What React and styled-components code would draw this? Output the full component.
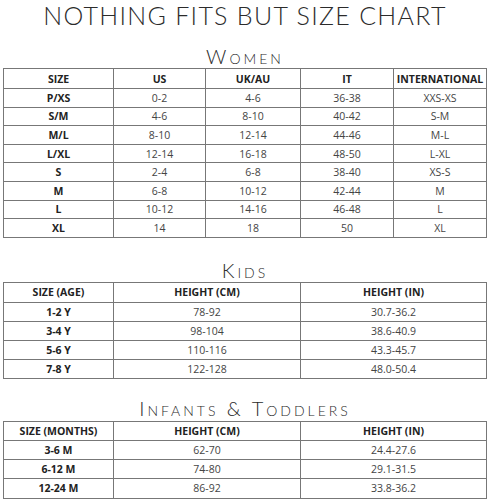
import React from 'react';
import styled, { createGlobalStyle } from 'styled-components';

const women = [
  ['P/XS', '0-2', '4-6', '36-38', 'XXS-XS'],
  ['S/M', '4-6', '8-10', '40-42', 'S-M'],
  ['M/L', '8-10', '12-14', '44-46', 'M-L'],
  ['L/XL', '12-14', '16-18', '48-50', 'L-XL'],
  ['S', '2-4', '6-8', '38-40', 'XS-S'],
  ['M', '6-8', '10-12', '42-44', 'M'],
  ['L', '10-12', '14-16', '46-48', 'L'],
  ['XL', '14', '18', '50', 'XL'],
];

const kids = [
  ['1-2 Y', '78-92', '30.7-36.2'],
  ['3-4 Y', '98-104', '38.6-40.9'],
  ['5-6 Y', '110-116', '43.3-45.7'],
  ['7-8 Y', '122-128', '48.0-50.4'],
];

const infants = [
  ['3-6 M', '62-70', '24.4-27.6'],
  ['6-12 M', '74-80', '29.1-31.5'],
  ['12-24 M', '86-92', '33.8-36.2'],
];

// heights below are the content box; collapsed borders add ~1px per row
const SizeTable = ({ cols, head, rows, headHeight, rowHeight }) => (
  <Table>
    <colgroup>
      {cols.map((w, i) => (
        <col key={i} style={{ width: w }} />
      ))}
    </colgroup>
    <thead>
      <tr>
        {head.map((h) => (
          <Th key={h} $h={headHeight}>{h}</Th>
        ))}
      </tr>
    </thead>
    <tbody>
      {rows.map((r) => (
        <tr key={r[0]}>
          {r.map((c, i) =>
            i === 0 ? (
              <RowHead key={i} $h={rowHeight}>{c}</RowHead>
            ) : (
              <Td key={i} $h={rowHeight}>{c}</Td>
            )
          )}
        </tr>
      ))}
    </tbody>
  </Table>
);

const App = () => {
  return (
    <>
      <GlobalStyle />
      <Page>
        <Title>NOTHING FITS BUT SIZE CHART</Title>
        <Section $top={17}>
          <Label>Women</Label>
          <SizeTable
            cols={['110px', '92px', '95px', '93px', '93px']}
            head={['SIZE', 'US', 'UK/AU', 'IT', 'INTERNATIONAL']}
            rows={women}
            headHeight={19}
            rowHeight={17.6}
          />
        </Section>
        <Section $top={22}>
          <Label>Kids</Label>
          <SizeTable
            cols={['110px', '187px', '186px']}
            head={['SIZE (AGE)', 'HEIGHT (CM)', 'HEIGHT (IN)']}
            rows={kids}
            headHeight={19}
            rowHeight={18}
          />
        </Section>
        <Section $top={19} $gap={3}>
          <Label>Infants &amp; Toddlers</Label>
          <SizeTable
            cols={['110px', '187px', '186px']}
            head={['SIZE (MONTHS)', 'HEIGHT (CM)', 'HEIGHT (IN)']}
            rows={infants}
            headHeight={18}
            rowHeight={18.3}
          />
        </Section>
      </Page>
    </>
  );
};

export default App;

const GlobalStyle = createGlobalStyle`
  body {
    margin: 0;
    background: #fff;
    font-family: "Open Sans", sans-serif;
  }
`;

const Page = styled.div`
  width: 490px;
  height: 500px;
  padding: 0 3px;
  box-sizing: border-box;
  display: flex;
  flex-direction: column;
  overflow: hidden;
`;

const Title = styled.h1`
  margin: 1px 0 0;
  text-align: center;
  font-family: "Lato", sans-serif;
  font-weight: 300;
  font-size: 25px;
  line-height: 28px;
  letter-spacing: 1.3px;
  color: #2b2b2b;
`;

const Section = styled.section`
  margin-top: ${(p) => p.$top}px;
  display: flex;
  flex-direction: column;
  gap: ${(p) => p.$gap ?? 2}px;
`;

const Label = styled.h2`
  margin: 0;
  text-align: center;
  font-family: "Lato", sans-serif;
  font-weight: 300;
  font-variant: small-caps;
  font-size: 20px;
  line-height: 20px;
  letter-spacing: 3px;
  color: #2b2b2b;
`;

const Table = styled.table`
  width: 483px;
  border-collapse: collapse;
  table-layout: fixed;
  border: 1.5px solid #777;
`;

const Th = styled.th`
  height: ${(p) => p.$h}px;
  padding: 0;
  border: 1px solid #777;
  font-size: 10.5px;
  line-height: 12px;
  font-weight: 700;
  color: #222;
  text-align: center;
  white-space: nowrap;
`;

const Td = styled.td`
  height: ${(p) => p.$h}px;
  padding: 0;
  border: 1px solid #777;
  font-size: 10.5px;
  line-height: 12px;
  font-weight: 400;
  color: #444;
  text-align: center;
`;

const RowHead = styled(Td)`
  font-weight: 700;
  color: #222;
`;
